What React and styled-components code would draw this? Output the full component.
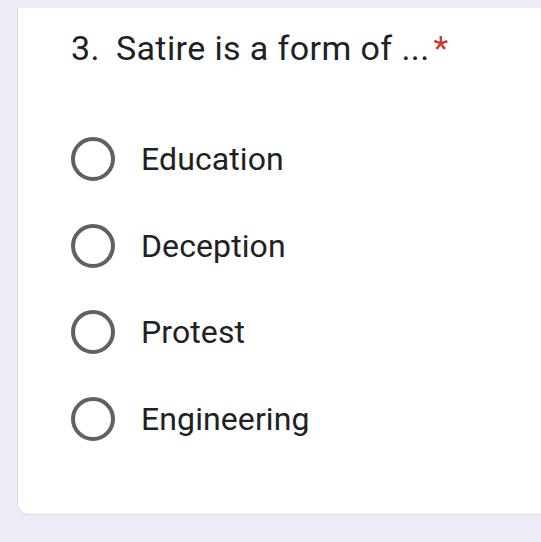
import React from "react";
import styled, { createGlobalStyle } from "styled-components";

const Global = createGlobalStyle`
  html, body { margin: 0; padding: 0; }
  body {
    background: #eeebf7;
    font-family: Roboto, "Noto Sans", Arial, sans-serif;
    overflow: hidden;
  }
`;

const Page = styled.div`
  padding: 8px 0 0 17px;
  height: 542px;
  box-sizing: border-box;
`;

const Card = styled.div`
  background: #ffffff;
  border: 1px solid #dcdae2;
  border-top: none;
  border-right: none;
  border-radius: 0 0 0 11px;
  height: 507px;
  width: 524px;
  box-sizing: border-box;
  padding: 18px 0 0 53px;
`;

const Question = styled.div`
  font-size: 34px;
  letter-spacing: 0.4px;
  color: #202124;
  line-height: 44px;
  display: flex;
  white-space: nowrap;
`;

const Num = styled.span`
  margin-right: 16px;
`;

const Star = styled.span`
  color: #c9392c;
  margin-left: 4px;
`;

const Options = styled.div`
  display: flex;
  flex-direction: column;
  gap: 42.5px;
  margin-top: 67px;
`;

const Option = styled.label`
  display: flex;
  align-items: center;
  height: 44px;
`;

const Radio = styled.span`
  width: 44px;
  height: 44px;
  box-sizing: border-box;
  border: 4px solid #5f6166;
  border-radius: 50%;
  flex: none;
  margin-right: 26px;
`;

const Label = styled.span`
  font-size: 32px;
  color: #202124;
  letter-spacing: 0.1px;
`;

const options = ["Education", "Deception", "Protest", "Engineering"];

export default function App() {
  return (
    <>
      <Global />
      <Page>
        <Card>
          <Question>
            <Num>3.</Num>
            <span>Satire is a form of ...</span>
            <Star>*</Star>
          </Question>
          <Options>
            {options.map((o) => (
              <Option key={o}>
                <Radio />
                <Label>{o}</Label>
              </Option>
            ))}
          </Options>
        </Card>
      </Page>
    </>
  );
}
